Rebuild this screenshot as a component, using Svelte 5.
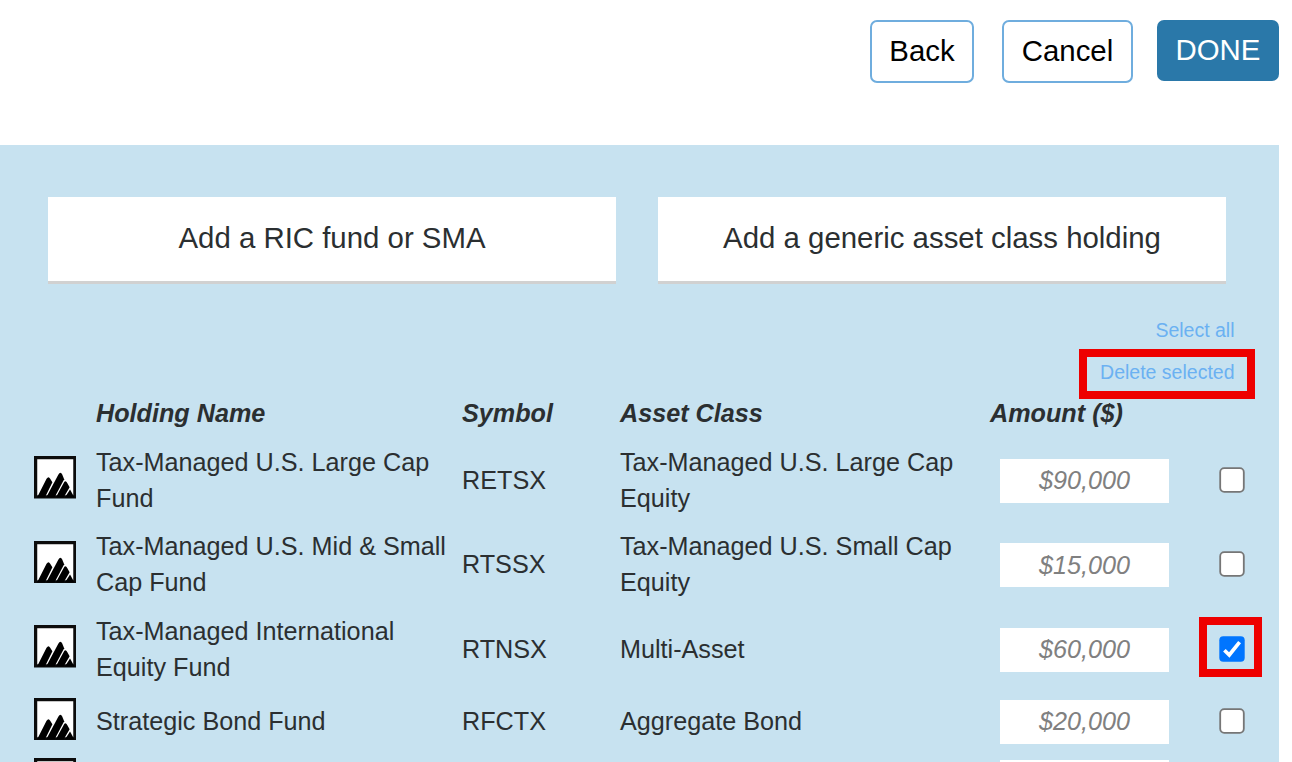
<script lang="ts">
	interface Holding {
		name: string
		symbol: string
		assetClass: string
		amount: string
		selected: boolean
	}

	let holdings: Holding[] = $state([
		{ name: 'Tax-Managed U.S. Large Cap Fund', symbol: 'RETSX', assetClass: 'Tax-Managed U.S. Large Cap Equity', amount: '$90,000', selected: false },
		{ name: 'Tax-Managed U.S. Mid & Small Cap Fund', symbol: 'RTSSX', assetClass: 'Tax-Managed U.S. Small Cap Equity', amount: '$15,000', selected: false },
		{ name: 'Tax-Managed International Equity Fund', symbol: 'RTNSX', assetClass: 'Multi-Asset', amount: '$60,000', selected: true },
		{ name: 'Strategic Bond Fund', symbol: 'RFCTX', assetClass: 'Aggregate Bond', amount: '$20,000', selected: false },
		{ name: '', symbol: '', assetClass: '', amount: '', selected: false }
	])

	function selectAll() {
		for (const h of holdings) h.selected = true
	}

	function deleteSelected() {
		holdings = holdings.filter(h => !h.selected)
	}
</script>

<div class="page">
	<header class="toolbar">
		<button class="btn back">Back</button>
		<button class="btn cancel">Cancel</button>
		<button class="btn done">DONE</button>
	</header>

	<main class="panel">
		<div class="add-row">
			<button class="add">Add a RIC fund or SMA</button>
			<button class="add">Add a generic asset class holding</button>
		</div>

		<div class="links">
			<button class="link" onclick={selectAll}>Select all</button>
			<button class="link marked" onclick={deleteSelected}>Delete selected</button>
		</div>

		<div class="row head">
			<span></span>
			<span>Holding Name</span>
			<span>Symbol</span>
			<span>Asset Class</span>
			<span class="head-amount">Amount ($)</span>
		</div>

		{#each holdings as holding}
			<div class="row">
				<svg class="logo" viewBox="0 0 42 42" aria-hidden="true">
					<rect x="1.6" y="1.6" width="38.8" height="38.8" fill="#fff" stroke="#0c0c0c" stroke-width="3.2" />
					<path d="M3 41L12.4 22.5Q14.4 19.5 16 22.5L18.2 26L10.8 41Z" />
					<path d="M12 41L24 18.5Q26.2 14.5 28 18.5L29.8 23L20.3 41Z" />
					<path d="M21.5 41L30 25.5Q31.5 24 33 27L35.2 31L29.3 41Z" />
					<path d="M30.5 41L35.6 33L40 41Z" />
				</svg>
				<span class="name">{holding.name}</span>
				<span class="symbol">{holding.symbol}</span>
				<span class="class">{holding.assetClass}</span>
				<input class="amount" placeholder={holding.amount} aria-label="Amount" />
				<button
					class="check"
					class:marked={holding.selected}
					role="checkbox"
					aria-checked={holding.selected}
					aria-label="Select holding"
					onclick={() => holding.selected = !holding.selected}
				>
					<svg viewBox="0 0 26 26">
						{#if holding.selected}
							<rect x="0.3" y="0.3" width="25.4" height="25.4" rx="4" fill="#0075ff" />
							<path d="M5.4 14.2L10.3 19L20.6 6.2" fill="none" stroke="#fff" stroke-width="3.7" />
						{:else}
							<rect x="1.2" y="1.2" width="23.6" height="23.6" rx="4" fill="#fff" stroke="#767676" stroke-width="1.8" />
						{/if}
					</svg>
				</button>
			</div>
		{/each}
	</main>
</div>

<style>
	:global(body) {
		margin: 0;
		background: #fff;
		overflow: hidden;
	}

	.page {
		height: 762px;
		overflow: hidden;
		font-family: "Liberation Sans", Arial, sans-serif;
		font-size: 25.2px;
		color: #2b2f31;
	}

	button {
		font: inherit;
		color: inherit;
		padding: 0;
		border: none;
		cursor: pointer;
	}

	.toolbar {
		display: flex;
		justify-content: flex-end;
		align-items: flex-start;
		box-sizing: border-box;
		height: 145px;
		padding: 20px 13px 0 0;
	}

	.btn {
		box-sizing: border-box;
		height: 63px;
		padding-bottom: 2px;
		font-size: 29.4px;
		border: 2px solid #6fadde;
		border-radius: 7px;
		background: #fff;
		color: #000;
	}

	.back {
		width: 104px;
		margin-right: 28px;
	}

	.cancel {
		width: 131px;
		margin-right: 24px;
	}

	.done {
		width: 122px;
		height: 61px;
		border: none;
		background: #2a78a9;
		color: #fff;
	}

	.panel {
		width: 1279px;
		height: 617px;
		box-sizing: border-box;
		overflow: hidden;
		padding-top: 52px;
		background: #c7e2f0;
	}

	.add-row {
		display: flex;
		gap: 42px;
		padding: 0 53px 0 48px;
	}

	.add {
		flex: 1;
		box-sizing: border-box;
		height: 87px;
		padding-bottom: 2px;
		background: #fff;
		border-bottom: 3px solid #d1d1d1;
		font-size: 29.4px;
	}

	.links {
		display: flex;
		flex-direction: column;
		align-items: flex-end;
		padding: 25px 44.5px 0 0;
	}

	.link {
		position: relative;
		height: 42px;
		background: none;
		color: #6bb1f2;
		font-size: 19.5px;
	}

	.link.marked::after {
		content: '';
		position: absolute;
		inset: -2px -20px -6px -21px;
		border: 8px solid #ee0000;
		pointer-events: none;
	}

	.row {
		display: grid;
		grid-template-columns: 62.5px 366px 158px 380px 218.5px 26px;
		align-items: center;
		padding: 6px 0 6.5px 33.5px;
		line-height: 36px;
		min-height: 47.5px;
	}

	.head {
		min-height: 0;
		padding-top: 2px;
		padding-bottom: 6.5px;
		font-weight: bold;
		font-style: italic;
	}

	.head-amount {
		margin-left: -10px;
	}

	.logo {
		width: 42.5px;
		height: 42.5px;
		margin-bottom: 4px;
	}

	.name {
		padding-right: 12px;
	}

	.class {
		padding-right: 24px;
	}

	.amount {
		box-sizing: border-box;
		width: 169px;
		height: 44px;
		margin-top: 2px;
		padding: 0;
		border: none;
		background: #fff;
		font: inherit;
		font-style: italic;
		text-align: center;
	}

	.amount::placeholder {
		color: #808080;
		opacity: 1;
	}

	.check {
		position: relative;
		width: 26px;
		height: 26px;
		background: none;
	}

	.check svg {
		display: block;
	}

	.check.marked::after {
		content: '';
		position: absolute;
		inset: -19px -17px -15px -20px;
		border: 8px solid #ee0000;
		pointer-events: none;
	}
</style>
